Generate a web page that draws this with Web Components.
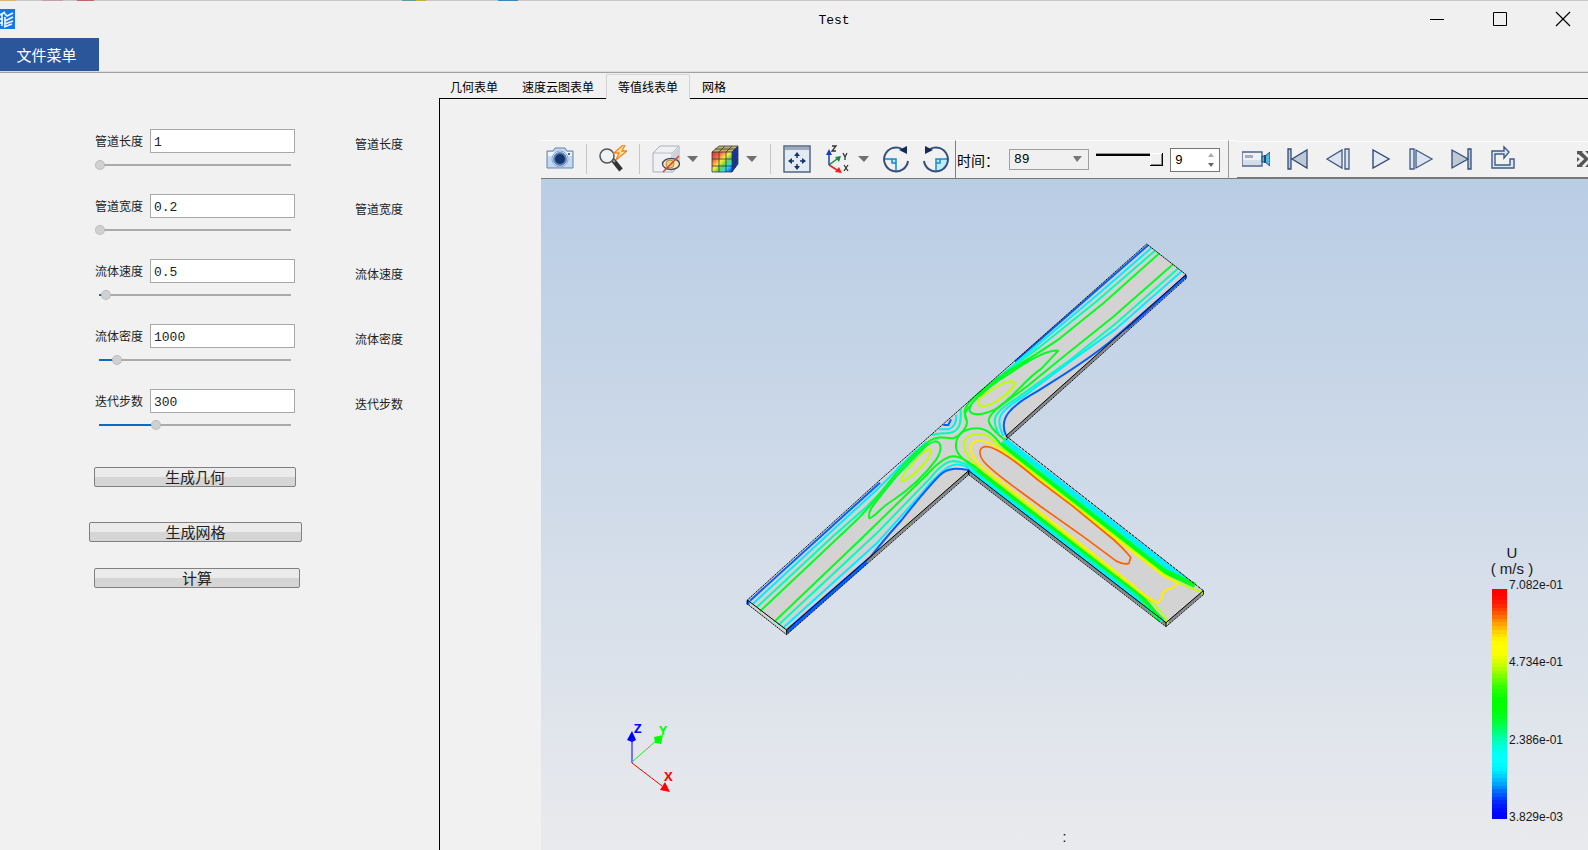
<!DOCTYPE html>
<html lang="zh">
<head>
<meta charset="utf-8">
<title>Test</title>
<style>
html,body{margin:0;height:100%}
body{font-family:"Liberation Sans","Noto Sans CJK SC",sans-serif;background:#f1f1f1;color:#000;overflow:hidden}
</style>
</head>
<body>
<test-app></test-app>
<script>
const define=(name,html,setup)=>{
  const t=document.createElement('template');t.innerHTML=html;
  customElements.define(name,class extends HTMLElement{
    constructor(){super();this.attachShadow({mode:'open'}).append(t.content.cloneNode(true));}
    connectedCallback(){if(setup&&!this.ready){this.ready=true;setup(this,this.shadowRoot);}}
  });
};

const icons={
camera:'<path d="M1 6h6l2-3h10l2 3h6v17H1z" fill="#c3d9f1" stroke="#6483ad"/><path d="M2 7h24v4H2z" fill="#edf5fd"/><circle cx="14" cy="14" r="8" fill="#e9f2fb" stroke="#8ba4c6"/><circle cx="14" cy="14" r="6" fill="#17346d" stroke="#5e83b8" stroke-width="2"/><circle cx="23" cy="9" r="1" fill="#17346d"/>',
search:'<path d="M14 15l8 10" stroke="#333" stroke-width="4.500"/><path d="M13 14l3 3" stroke="#999" stroke-width="2"/><circle cx="8" cy="11" r="7" fill="#eef3f6" stroke="#555" stroke-width="1.500"/><path d="M24 0L15 8h5l-3 7 11-9h-5l3-6z" fill="#ffe2a0" stroke="#ee8822" stroke-width="1.300"/>',
hide:'<path d="M1 8l7-7h19v19l-6 7H1z" fill="#eff0f4" stroke="#a8afba"/><path d="M1 8h19v19M20 8l7-7" fill="none" stroke="#b8bec8"/><path d="M21 8l5-5v17l-5 5z" fill="#ccd1da"/><ellipse cx="19" cy="19" rx="8.500" ry="5.500" fill="#fbe7a6" stroke="#444a70" stroke-width="1.400"/><circle cx="18" cy="19" r="4" fill="#f1c979" stroke="#a98d60"/><path d="M11 27L27 11" stroke="#d34525" stroke-width="1.400"/>',
cube:'<defs><linearGradient id="c" x2="1" y2="1"><stop stop-color="#d63224"/><stop offset=".25" stop-color="#f36b43"/><stop offset=".45" stop-color="#ffeb3b"/><stop offset=".62" stop-color="#63d64b"/><stop offset=".78" stop-color="#28d9ff"/><stop offset="1" stop-color="#0636dc"/></linearGradient></defs><path d="M1 7l7-6h19l-6 6z" fill="#c6b35f"/><path d="M1 7h20v20H1z" fill="url(#c)"/><path d="M21 7l6-6v18l-6 8z" fill="#123cac"/><path d="M1 7h20v20H1zM1 14h20l6-6M1 21h20l6-7M8 7v20M15 7v20M1 7l7-6h19l-6 6M8 7l6-6M15 7l6-6M4 4h20v19M21 27l6-8V1" fill="none" stroke="#263046" stroke-opacity=".75"/>',
fit:'<path d="M1 1h26v26H1z" fill="#e3eaf2" stroke="#506582" stroke-width="1.500"/><path d="M2 2h24v3H2z" fill="#9daabd"/><path d="M14 7l3 4h-6zM14 25l3-4h-6zM5 16l4-3v6zM23 16l-4-3v6z" fill="#173564"/><path d="M14 10v3M14 19v3M8 16h3M17 16h3" stroke="#173564" stroke-width="1.500"/>',
axes:'<path d="M6 20V8" stroke="#183fbc" stroke-width="1.500"/><path d="M6 4l3 6H3z" fill="#183fbc"/><path d="M6 20l8-6" stroke="#168640" stroke-width="1.500"/><path d="M18 11l-2 6-4-5z" fill="#168640"/><path d="M6 20l8 5" stroke="#ed2020" stroke-width="1.500"/><path d="M19 28l-7-1 4-5z" fill="#ed2020"/><g fill="none" stroke="#333" stroke-width="1.300"><path d="M9 1h4L9 6h4M20 8l2 4 2-4M22 12v3M21 20l4 6M25 20l-4 6"/></g>',
cw:'<path d="M14 14v12A12 12 0 002 14z" fill="#bcecff"/><path d="M2 14h12v12M10 14v4h4" fill="none" stroke="#168acb" stroke-width="1.500"/><path d="M20 4A12 12 0 1 0 26 16" fill="none" stroke="#36517e" stroke-width="2"/><path d="M25 1v8l-8-4z" fill="#122c59"/>',
ccw:'<path d="M14 14v12A12 12 0 0026 14z" fill="#bcecff"/><path d="M26 14H14v12M18 14v4h-4" fill="none" stroke="#168acb" stroke-width="1.500"/><path d="M8 4A12 12 0 1 1 2 16" fill="none" stroke="#36517e" stroke-width="2"/><path d="M3 1v8l8-4z" fill="#122c59"/>',
video:'<path d="M0 7h20v14H0z" fill="#edf1f7" stroke="#4c6488" stroke-width="1.400"/><path d="M1 15h18v5H1z" fill="#d5dde9"/><path d="M3 10h8v3H3z" fill="#a9adb5"/><path d="M20 11h3l5-4v14l-5-4h-3z" fill="#4cb8e4" stroke="#244773"/><path d="M23 10v8" stroke="#244773" stroke-width="2"/>',
first:'<path d="M24 5v18L9 14zM5 4h3v20H5z" fill="#bfc8d5" stroke="#314c7c" stroke-width="1.300"/>',
back:'<path d="M18 5v18L3 14zM21 4h4v20h-4z" fill="#dce4ef" stroke="#405a87" stroke-width="1.300"/>',
play:'<path d="M8 5v18l16-9z" fill="#e3eaf4" stroke="#314c7c" stroke-width="1.400"/>',
next:'<path d="M10 5v18l16-9zM4 4h4v20H4z" fill="#dce4ef" stroke="#405a87" stroke-width="1.300"/>',
last:'<path d="M5 5v18l16-9zM21 4h3v20h-3z" fill="#bfc8d5" stroke="#314c7c" stroke-width="1.300"/>',
loop:'<path d="M11 6H4v17h22V14h-4v6H7V9h9v4l5-6-5-5v4z" fill="#dbe9f7" stroke="#405a87" stroke-width="1.400"/>',
more:'<path d="M0 6h12v16H0z" fill="#555"/><path d="M0 10l5 4-5 5M6 6l6 6M6 22l6-6" stroke="#eee" stroke-width="3" fill="none"/>'
};
define('tool-button',`<style>:host{display:flex;flex:none;align-items:center;gap:7px}button{display:block;border:0;padding:0;background:none;line-height:0}svg{display:block}#more{display:none;width:12px;height:28px}:host([menu]) #more{display:block}</style>
<button id="main"><svg width="28" height="28"></svg></button><button id="more" aria-haspopup="true"><svg width="12" height="28"><path d="M0 11h11l-5 6z" fill="#6f6f6f"/></svg></button>`,
(h,r)=>{r.querySelector('svg').innerHTML=icons[h.getAttribute('icon')];r.querySelector('#main').setAttribute('aria-label',h.getAttribute('name'));r.querySelector('#more').setAttribute('aria-label',h.getAttribute('name')+'选项');});

define('window-title',`<style>:host{display:block;height:38px;background:#f0f0f0}
.edge{height:1px;background:linear-gradient(90deg,#d7b56c 0 16px,#c9c6c6 16px 42px,#c0a1a5 42px 63px,#c9c6c6 63px 77px,#c26468 77px 94px,#c9c6c6 94px 402px,#609a9b 402px 416px,#c9ad30 416px 426px,#c9c6c6 426px 498px,#338abc 498px 518px,#c9c6c6 518px)}
header{display:grid;grid-template-columns:1fr auto 1fr;align-items:center;height:37px}
h1{font:400 13px/18px "Liberation Mono",monospace;margin:2px 0 0 80px}
nav{display:flex;justify-content:flex-end;gap:35px;padding-right:11px}button{border:0;background:none;padding:0;line-height:0}svg{display:block}.logo{margin-top:-2px}</style>
<div class="edge"></div><header><svg class="logo" width="15" height="20"><path d="M0 0h15v20H0z" fill="#1677eb"/><path d="M0 6l5-3M2 5v12M0 10h3M0 14h3" fill="none" stroke="#f2f7ff" stroke-width="1.600"/><path d="M4 4l3 3 6-3M5 12l8-4M5 15l8-3M4 18l8-3M5 8v9" fill="none" stroke="#f2f7ff" stroke-width="1.600"/></svg><h1>Test</h1>
<nav><button aria-label="最小化"><svg width="28" height="28"><path d="M7 13.500h14" stroke="#000"/></svg></button><button aria-label="最大化"><svg width="28" height="28"><path d="M7.500 6.500h13v13h-13z" fill="none" stroke="#000"/></svg></button><button aria-label="关闭"><svg width="28" height="28"><path d="M7 6l14 14M21 6L7 20" stroke="#000" stroke-width="1.200"/></svg></button></nav></header>`);

define('menu-strip',`<style>:host{display:flex;height:34px;background:#f0f0f0;border-bottom:1px solid #a0a0a0;box-shadow:inset 0 -1px #ddd}button{border:0;width:99px;height:33px;padding:0 6px 0 0;background:#2b579a;color:#fff;font:15px/20px "Noto Sans CJK SC",sans-serif}</style><button>文件菜单</button>`);

define('param-field',`<style>:host{display:grid;grid-template-columns:55px 145px auto;grid-template-rows:24px 10px;row-gap:7px;font:12px/24px "Noto Sans CJK SC",sans-serif;color:#222}
.box{box-sizing:border-box;width:145px;height:24px;border:1px solid #a8a8a8;background:#fff;font:13px/20px "Liberation Mono",monospace;padding:2px 3px 0;color:#222}
.range{appearance:none;grid-column:1/3;width:197px;height:10px;margin:0;background:linear-gradient(90deg,#0a6bbf var(--v),#aaa 0) 4px 4px/192px 2px no-repeat}
.range::-webkit-slider-thumb{appearance:none;width:10px;height:10px;border-radius:5px;background:#d0d0d0;border:1px dotted #aaa}
.unit{grid-column:3;grid-row:1/3;margin-left:60px;line-height:30px}label{white-space:nowrap}</style>
<label for="v"></label><input class="box" id="v" type="text"><input class="range" type="range" min="0" max="100"><span class="unit"></span>`,
(h,r)=>{const n=h.getAttribute('label'),p=h.getAttribute('pos');r.querySelector('label').textContent=n;r.querySelector('.unit').textContent=n;r.querySelector('.box').value=h.getAttribute('value');const s=r.querySelector('.range');s.value=p;s.setAttribute('aria-label',n);s.style.setProperty('--v',p+'%');});

define('action-button',`<style>:host{display:block}button{display:block;width:100%;height:20px;padding:0;border:1px solid #808080;border-radius:2px;background:linear-gradient(#ebebeb 50%,#d5d5d5 50%);color:#222;font:15px/18px "Noto Sans CJK SC",sans-serif}</style><button><slot></slot></button>`);

define('side-panel',`<style>:host{display:block;padding:55px 0 0 95px}section{display:grid;gap:24px}.actions{display:block;margin:37px 0 0 -6px}
#a,#c{margin-left:5px}#a{width:202px}#b{width:213px;margin-top:35px}#c{width:206px;margin-top:26px}</style>
<section><param-field label="管道长度" value="1" pos="0"></param-field><param-field label="管道宽度" value="0.2" pos="0"></param-field><param-field label="流体速度" value="0.5" pos="3"></param-field><param-field label="流体密度" value="1000" pos="9"></param-field><param-field label="迭代步数" value="300" pos="30"></param-field></section>
<div class="actions"><action-button id="a">生成几何</action-button><action-button id="b">生成网格</action-button><action-button id="c">计算</action-button></div>`);

define('form-tabs',`<style>:host{display:flex;height:24px;margin-left:-1px}button{box-sizing:border-box;border:1px solid transparent;border-bottom:0;background:none;padding:0 11px;height:25px;color:#000;font:12px/22px "Noto Sans CJK SC",sans-serif;white-space:nowrap}
.on{position:relative;background:#f1f1f1;border-color:#d5d5d5}</style>
<button>几何表单</button><button>速度云图表单</button><button class="on" aria-pressed="true">等值线表单</button><button>网格</button>`);

define('view-tools',`<style>:host{display:flex;height:39px;overflow:hidden}
div{display:flex;align-items:center;box-sizing:border-box;height:39px;border-top:1px solid #fff;border-bottom:1px solid #777;flex:none}
.a{gap:12px;padding:0 5px 1px}.sep{width:1px;height:30px;background:#c6c6c6}
.b{gap:7px;border-left:1px solid #808080;border-right:1px solid #999;padding:0 8px 0 1px}
.c{gap:13px;padding:0 0 1px 5px;flex:1;height:38px;margin-top:1px;min-width:0;border-bottom-width:2px;overflow:hidden}
.gap{width:8px}.c tool-button:last-child{margin-left:auto;width:11px;overflow:hidden}
label{width:45px;font:14px/18px "Noto Sans CJK SC",sans-serif}
select,.spin{box-sizing:border-box;border:1px solid #a0a0a0;border-radius:0;font:13px/18px "Liberation Mono",monospace;color:#000}
select{appearance:none;width:80px;height:21px;padding:1px 4px 0;background:#f0f0f0}
span{position:relative;display:flex}span svg{position:absolute;right:5px;top:0;pointer-events:none}
.spin{width:50px;height:24px;border-color:#777;background:#fff;padding:2px 4px 0;appearance:textfield}.spin::-webkit-inner-spin-button{display:none}
.time{appearance:none;width:67px;height:14px;margin:0;background:linear-gradient(#999 33%,#000 33%) 0 0/100% 3px no-repeat}
.time::-webkit-slider-thumb{appearance:none;width:13px;height:13px;background:#f1f1f1;border:solid #000;border-width:0 1px 1px 0;box-shadow:inset 1px 1px #fff,inset -1px -1px #888}</style>
<div class="a"><tool-button icon="camera" name="截图"></tool-button><i class="sep"></i><tool-button icon="search" name="快速查找"></tool-button><i class="sep"></i><tool-button icon="hide" name="显示" menu></tool-button><tool-button icon="cube" name="着色" menu></tool-button><i class="sep"></i><tool-button icon="fit" name="适应窗口"></tool-button><tool-button icon="axes" name="视角" menu></tool-button><tool-button icon="cw" name="顺时针旋转"></tool-button><tool-button icon="ccw" name="逆时针旋转"></tool-button></div>
<div class="b"><label for="t">时间：</label><span><select id="t"><option>89</option></select><svg width="16" height="21"><path d="M5 7h9l-5 6z" fill="#777"/></svg></span><input class="time" type="range" aria-label="时间步" min="0" max="9" value="9"><span><input class="spin" type="number" aria-label="步数" value="9"><svg width="8" height="24"><path d="M1 9h6L4 5z" fill="#aaa"/><path d="M1 15h6l-3 4z" fill="#666"/></svg></span></div><div class="gap"></div>
<div class="c"><tool-button icon="video" name="录像"></tool-button><tool-button icon="first" name="第一帧"></tool-button><tool-button icon="back" name="上一帧"></tool-button><tool-button icon="play" name="播放"></tool-button><tool-button icon="next" name="下一帧"></tool-button><tool-button icon="last" name="最后一帧"></tool-button><tool-button icon="loop" name="循环"></tool-button><tool-button icon="more" name="更多"></tool-button></div>`);

/* Paths are digitised at three units per pixel, one group for each branch of the pipe. */
define('flow-model',`<style>:host{display:block}svg{display:block}.l{fill:none;stroke-width:6;stroke-linejoin:round}.e{fill:none;stroke:#000;stroke-width:3}.b{stroke:#0060ff}.c{stroke:#00eeff}.t{stroke:#00ffb4}.g{stroke:#00ff1e}.y{stroke:#beff00}.w{stroke:#ffee00}.o{stroke:#ff6000}</style>
<svg width="480" height="410" viewBox="2220 708 1440 1230">
<g transform="translate(2190 1200)"><path fill="#d3d3d3" d="M52 600L1250-468 1368-376 828 108 1420 572V584L1308 678 716 222 170 702 52 612z"/>
<path d="M170 696L716 217M828 114L1368-372M716 217L1308 673 1420 577" fill="none" stroke="#888" stroke-width="8"/></g>
<g transform="translate(2850 1260)" class="l"><path class="c" style="stroke-width:18" d="M162 60L650 439 712 484"/><path class="c" style="stroke-width:14" d="M60 149L560 532 640 602"/>
<path class="g" style="stroke-width:16" d="M150 72L640 452 735 496"/><path class="g" style="stroke-width:16" d="M65 137L570 527 632 600"/>
<path class="t" style="stroke-width:4" d="M158 64L640 439"/><path class="t" style="stroke-width:4" d="M62 144L560 526 620 590"/>
<path class="g" d="M155 78Q120 25 80 25C30 26 15 55 18 85Q25 115 80 145"/>
<path class="y" d="M652 608Q640 575 590 533L85 142Q38 100 42 72C46 35 108 32 133 64L160 88 640 462Q700 500 757 516V525M652 595v20"/>
<path class="w" d="M685 490L640 467 170 104Q115 57 80 63C48 73 62 112 100 143L540 488Q590 535 625 548L633 540 637 520 650 508 670 502z"/>
<path class="o" style="stroke-width:5" d="M105 80C86 83 85 105 100 123 130 160 200 205 270 258L400 350 500 424Q520 435 537 430L542 412Q510 373 470 342L370 260 260 177Q140 75 105 80z"/></g>
<g transform="translate(2190 1200)"><g class="l"><path class="b" d="M60 602L450 248"/><path class="c" d="M68 612L325 375 440 270 560 150M500 208L590 125"/><path class="t" d="M80 622L310 408 410 320 590 137"/>
<path class="g" d="M90 634L370 370C460 285 490 205 600 122 630 103 650 118 672 114 690 108 712 82 711 64 700 45 703 30 725 15"/>
<path class="g" d="M418 355C410 330 440 305 480 252 530 190 580 135 614 124 637 125 637 152 616 182 580 230 535 270 490 300 455 320 435 350 418 355z"/>
<path class="y" d="M515 245Q515 225 540 200C565 168 590 145 600 148Q610 155 585 188 545 235 515 245z"/>
<path class="g" d="M133 665L400 410 590 225Q640 170 670 169C695 170 715 185 750 212"/><path class="t" d="M145 675L440 400 600 235Q640 185 670 183 700 184 740 210"/><path class="c" d="M158 685L440 430 575 280Q640 200 673 194 700 192 718 205"/><path class="b" d="M170 690L420 472Q470 410 515 360 590 265 630 225C655 202 680 205 716 210V222"/>
<path class="b" d="M640 75H655L663 58"/><path class="c" d="M627 88H655Q680 80 679 44"/><path class="t" d="M605 105Q630 98 650 100C690 98 694 70 692 28"/></g></g>
<g transform="translate(2790 690)" class="l"><path class="b" d="M655 45L255 395"/><path class="c" d="M664 54L490 205 340 330 140 498"/><path class="t" d="M675 62L500 214 330 350 185 458"/>
<path class="g" d="M688 70L520 220 390 325C290 395 180 450 125 510 95 540 103 550 110 570"/><path class="g" style="stroke-width:7" d="M300 385L225 430 145 500"/>
<path class="g" d="M385 362C350 358 290 395 240 430 180 465 120 515 118 538 120 558 155 557 195 538 250 505 280 452 335 415z"/>
<path class="y" d="M255 458C240 442 195 473 160 495 140 512 143 525 155 528 190 530 245 485 255 458z"/>
<path class="g" d="M730 102L550 260 400 380 300 462C240 510 175 545 176 573Q180 595 225 630"/><path class="t" d="M745 115L560 278 420 390 260 505C185 550 185 570 206 612"/><path class="c" d="M757 122L560 295 420 395 280 500C205 545 195 565 220 618"/><path class="b" d="M768 137L540 335C460 400 390 440 320 485 240 530 205 565 228 616"/></g>
<g transform="translate(2190 1200)"><path class="l b" style="stroke-width:9" d="M170 697L410 486M1190-214L1368-372M54 602v12"/></g>
<g transform="translate(2190 1200)" class="e"><path stroke-dasharray="5 2" d="M52 600L450 240 900-158 1250-468 1368-376M1368-364L828 120M52 612L170 704 716 224M716 224L1308 680 1420 584"/><path d="M1368-376V-364M1368-376L828 108M52 600V612M170 704V690L716 212M52 600L170 690M716 212V224M1308 680V668L716 212M1308 668L1420 572V584"/><path stroke-dasharray="9 3" d="M828 108L1420 572"/></g>
</svg>`);

define('axis-triad',`<style>:host{display:block}svg{display:block;font:700 13px "Open Sans",sans-serif}</style><svg width="60" height="80">
<path d="M12 46V20" stroke="#00f"/><path d="M12 14l4 9-4 2-5-2z" fill="#00f"/><path d="M12 45l25-22" stroke="#0f0"/><path d="M43 18l-9 2 1 6 6 1z" fill="#0f0"/><path d="M12 46l30 23" stroke="red"/><path d="M50 75l-10-2 5-8z" fill="red"/><text x="14" y="16" fill="#00f">Z</text><text x="39" y="18" fill="#0f0">Y</text><text x="44" y="64" fill="red">X</text></svg>`);

define('color-legend',`<style>:host{display:block;color:#181818;font:12px/14px "Liberation Sans",sans-serif}header{font-size:15px;line-height:16px;text-align:center;width:48px;margin-left:-4px;white-space:nowrap}
section{display:flex;gap:2px;margin:12px 0 0}#bar{width:15px;height:230px}ol{list-style:none;display:flex;flex-direction:column;justify-content:space-between;margin:-11px 0 -5px;padding:0}</style>
<header>U<br>( m/s )</header><section><div id="bar"></div><ol><li>7.082e-01</li><li>4.734e-01</li><li>2.386e-01</li><li>3.829e-03</li></ol></section>`,
(h,r)=>{const k=[[255,0,0],[255,255,0],[0,255,0],[0,255,255],[0,0,255]],n=62,s=[];
for(let i=0;i<n;i++){const p=i/(n-1)*4,j=Math.min(3,Math.floor(p)),t=.5-.5*Math.cos((p-j)*Math.PI),c=k[j].map((v,m)=>Math.round(v+(k[j+1][m]-v)*t));s.push(`rgb(${c}) ${i/n*100}% ${(i+1)/n*100}%`);}
r.querySelector('#bar').style.background=`linear-gradient(${s})`;});

define('flow-view',`<style>:host{display:block;position:relative;overflow:hidden;background:linear-gradient(#b9cde5,#e9eaed)}
flow-model{position:absolute;left:199px;top:57px}axis-triad{position:absolute;left:79px;bottom:53px}color-legend{position:absolute;right:25px;bottom:31px}p{position:absolute;left:0;right:0;bottom:4px;margin:0;text-align:center;font:14px/18px "Liberation Sans",sans-serif}</style>
<flow-model></flow-model><axis-triad></axis-triad><color-legend></color-legend><p>:</p>`);

define('test-app',`<style>:host{display:flex;flex-direction:column;height:100vh}main{flex:1;display:grid;grid-template-columns:439px minmax(0,1fr);min-height:0;padding-top:1px}
.work{display:flex;flex-direction:column;min-height:0}.panel{flex:1;display:flex;flex-direction:column;border:solid #000;border-width:1px 0 0 1px;padding:41px 0 0 101px;min-height:0}flow-view{flex:1}</style>
<window-title></window-title><menu-strip></menu-strip><main><side-panel></side-panel><div class="work"><form-tabs></form-tabs><div class="panel"><view-tools></view-tools><flow-view></flow-view></div></div></main>`);
</script>
</body>
</html>
